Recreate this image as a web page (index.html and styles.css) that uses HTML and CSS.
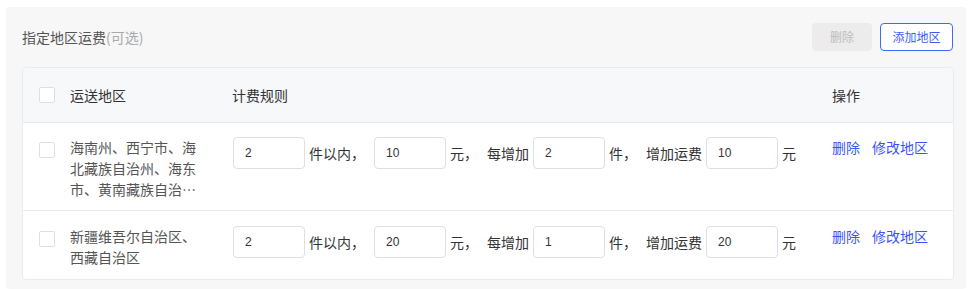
FILE: index.html
```html
<!DOCTYPE html>
<html lang="zh-CN">
<head>
<meta charset="utf-8">
<link rel="stylesheet" href="styles.css">
</head>
<body>
<div class="panel">
  <div class="topbar">
    <div class="title">指定地区运费<span class="optional">(可选)</span></div>
    <div class="actions">
      <button class="btn btn-disabled" type="button">删除</button>
      <button class="btn btn-outline" type="button">添加地区</button>
    </div>
  </div>
  <div class="table">
    <div class="row head">
      <div class="c-check"><span class="checkbox"></span></div>
      <div class="c-region">运送地区</div>
      <div class="c-rule">计费规则</div>
      <div class="c-ops">操作</div>
    </div>
    <div class="row body">
      <div class="c-check"><span class="checkbox"></span></div>
      <div class="c-region"><div class="region-text">海南州、西宁市、海北藏族自治州、海东市、黄南藏族自治州、果洛藏族自治州</div></div>
      <div class="c-rule">
        <span class="input">2</span><span class="lbl comma">件以内，</span>
        <span class="input">10</span><span class="lbl comma">元，</span>
        <span class="lbl">每增加</span><span class="input">2</span><span class="lbl comma">件，</span>
        <span class="lbl">增加运费</span><span class="input">10</span><span class="lbl">元</span>
      </div>
      <div class="c-ops"><a class="link">删除</a><a class="link">修改地区</a></div>
    </div>
    <div class="row body last">
      <div class="c-check"><span class="checkbox"></span></div>
      <div class="c-region"><div class="region-text">新疆维吾尔自治区、西藏自治区</div></div>
      <div class="c-rule">
        <span class="input">2</span><span class="lbl comma">件以内，</span>
        <span class="input">20</span><span class="lbl comma">元，</span>
        <span class="lbl">每增加</span><span class="input">1</span><span class="lbl comma">件，</span>
        <span class="lbl">增加运费</span><span class="input">20</span><span class="lbl">元</span>
      </div>
      <div class="c-ops"><a class="link">删除</a><a class="link">修改地区</a></div>
    </div>
  </div>
</div>
</body>
</html>
```

FILE: styles.css
```css
* { box-sizing: border-box; }
html, body { margin: 0; padding: 0; background: #ffffff; }
body {
  font-family: "Noto Sans CJK SC", "Noto Sans", "Liberation Sans", sans-serif;
  font-size: 14px;
  color: #333;
}
.panel {
  margin: 7px 0 0 6px;
  width: 960px;
  height: 282px;
  background: #f7f7f8;
  border-radius: 4px;
  padding: 16px 12px 0 16px;
}
.topbar {
  display: flex;
  align-items: center;
  justify-content: space-between;
  height: 28px;
  margin-bottom: 16px;
  padding-right: 1px;
}
.title { color: #555; font-size: 14px; line-height: 20px; }
.optional { color: #aaa; }
.actions { display: flex; gap: 8px; }
.btn {
  height: 28px;
  border-radius: 4px;
  font-family: inherit;
  font-size: 12px;
  padding: 0;
  line-height: 26px;
  text-align: center;
  white-space: nowrap;
  cursor: pointer;
}
.btn-disabled {
  width: 60px;
  background: #ececec;
  border: 1px solid #ececec;
  color: #bdbdbd;
}
.btn-outline {
  width: 73px;
  background: #fff;
  border: 1px solid #3b6cf6;
  color: #3b5ff5;
}
.table {
  width: 932px;
  background: #fff;
  border: 1px solid #ebebeb;
  border-radius: 4px;
  overflow: hidden;
}
.row {
  display: flex;
  padding-left: 16px;
}
.row.head {
  height: 55px;
  align-items: center;
  background: #f7f8fa;
  color: #333;
  border-bottom: 1px solid #ebebeb;
}
.row.body {
  align-items: flex-start;
  padding-top: 14px;
  padding-bottom: 10px;
  border-bottom: 1px solid #ebebeb;
}
.row.body.last { border-bottom: 0; padding-top: 15px; padding-bottom: 11px; }
.c-check { width: 31px; flex: none; display: flex; }
.row.body .c-check { padding-top: 5px; }
.checkbox {
  display: block;
  width: 16px;
  height: 16px;
  background: #fff;
  border: 1px solid #dcdfe6;
  border-radius: 2px;
}
.c-region { width: 162px; flex: none; }
.region-text {
  width: 130px;
  color: #555;
  line-height: 21px;
  display: -webkit-box;
  -webkit-box-orient: vertical;
  -webkit-line-clamp: 3;
  overflow: hidden;
  text-overflow: ellipsis;
}
.c-rule {
  width: 600px;
  flex: none;
  display: flex;
  align-items: center;
  gap: 4px;
}
.row.head .c-rule { display: block; }
.row.body .c-rule { padding-left: 1px; }
.input {
  width: 72px;
  height: 32px;
  flex: none;
  border: 1px solid #dcdfe6;
  border-radius: 4px;
  padding-left: 11px;
  font-family: "Liberation Sans", sans-serif;
  font-size: 12px;
  line-height: 30px;
  color: #333;
}
.lbl { color: #333; white-space: nowrap; }
.lbl.comma { margin-right: 5px; }
.c-ops { flex: 1; display: flex; gap: 12px; }
.row.body .c-ops { line-height: 20px; }
.link { color: #3b55f5; cursor: pointer; }
```
